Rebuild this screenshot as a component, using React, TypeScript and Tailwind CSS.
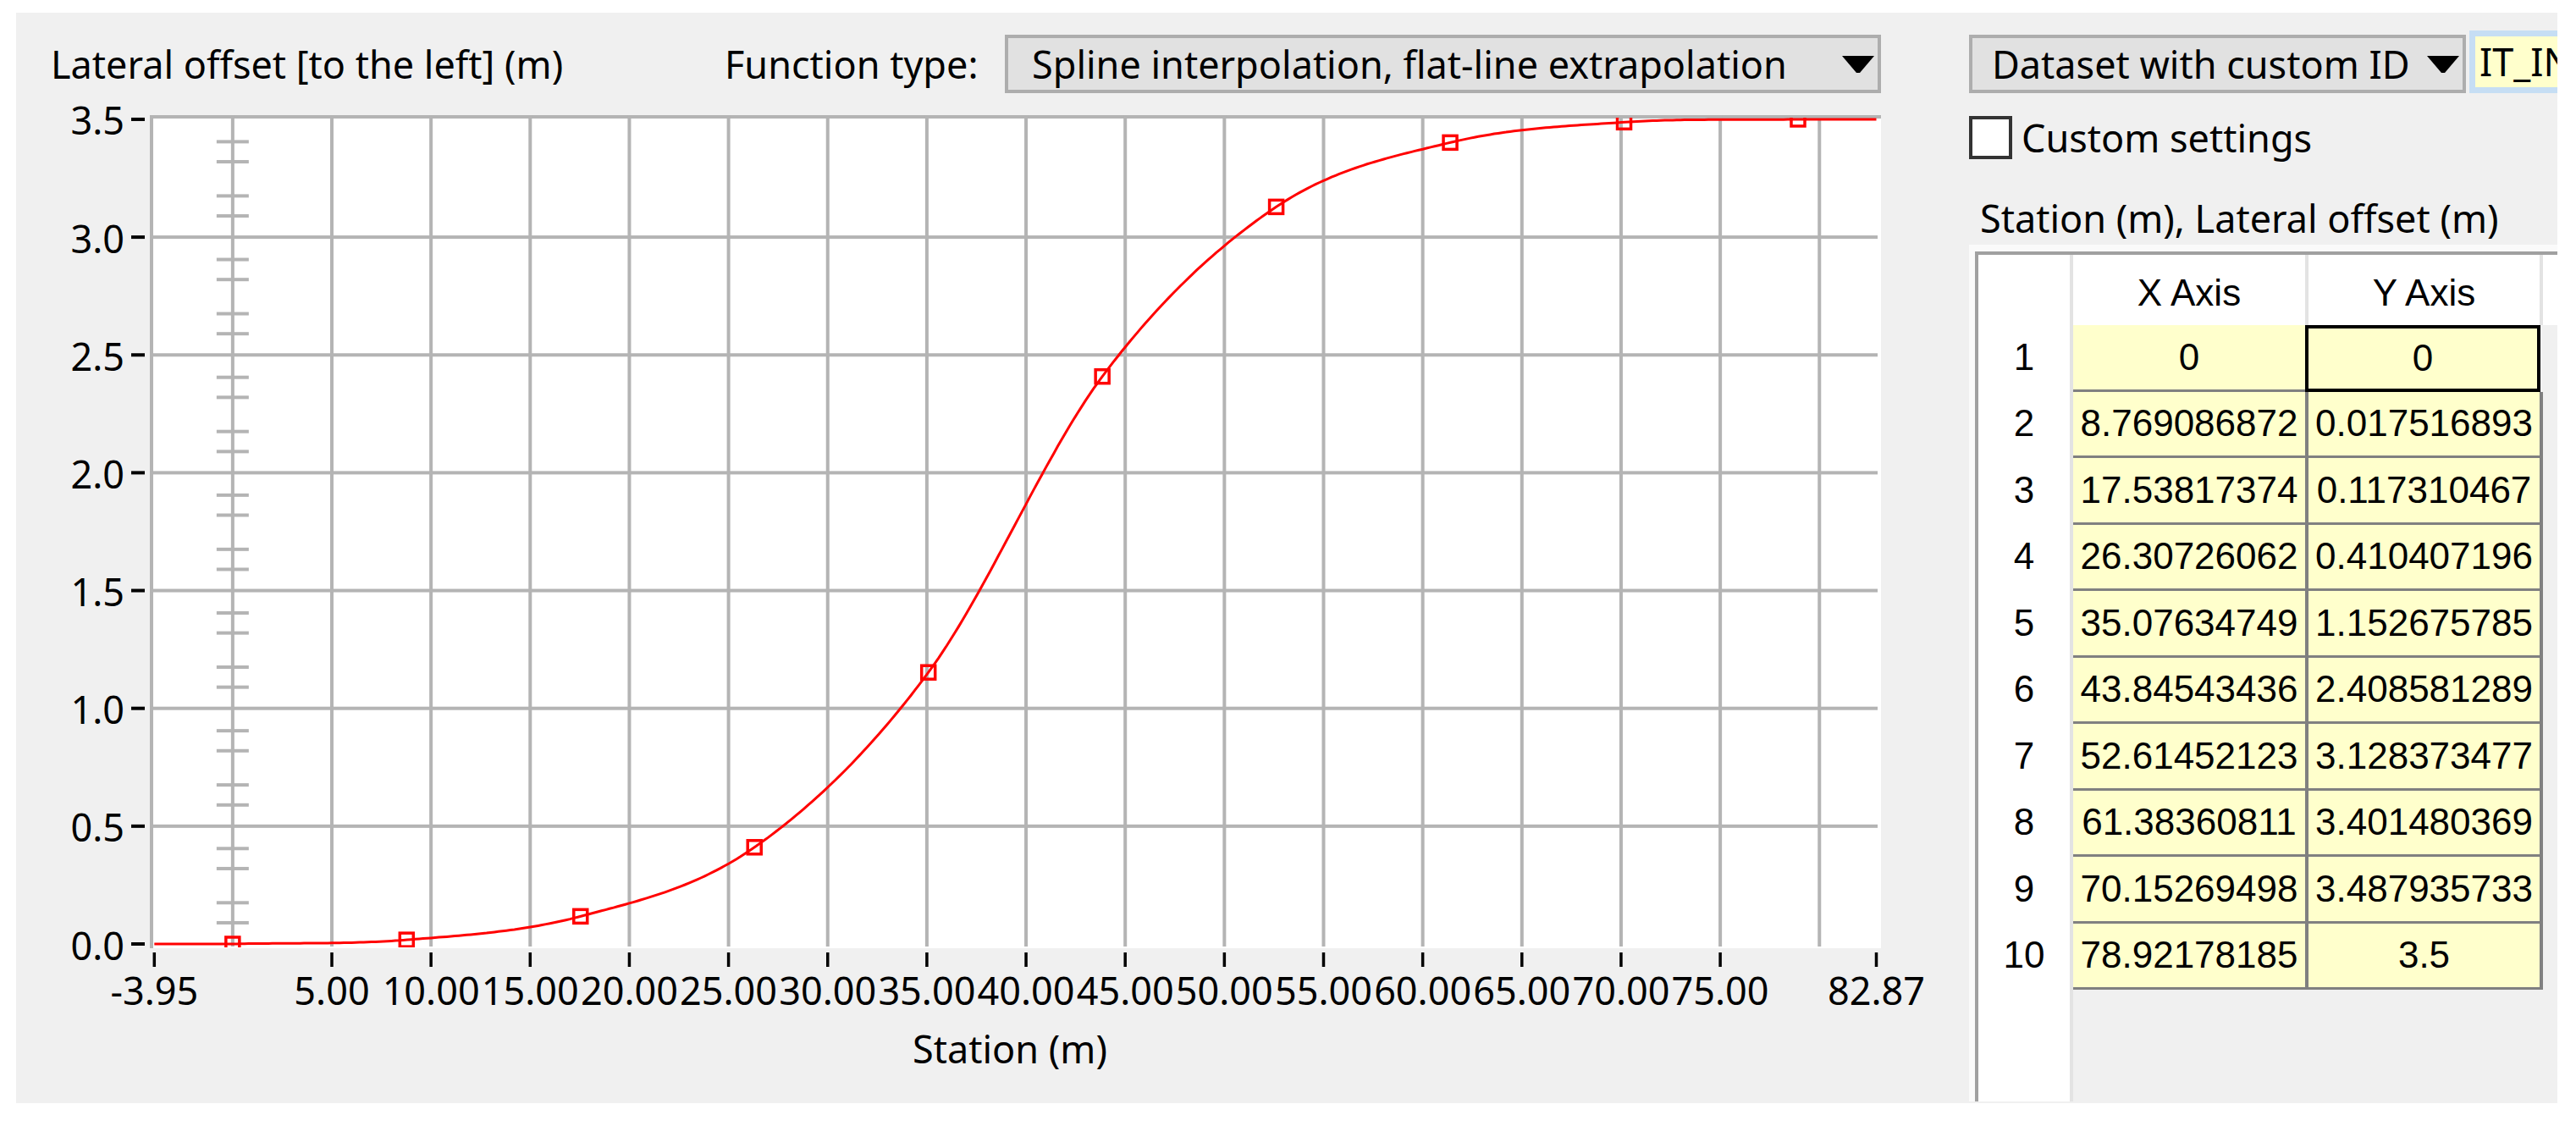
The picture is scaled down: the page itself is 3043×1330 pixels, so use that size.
import React from "react";

const XS = [0, 8.769086872, 17.53817374, 26.30726062, 35.07634749, 43.84543436, 52.61452123, 61.38360811, 70.15269498, 78.92178185];
const YS = [0, 0.017516893, 0.117310467, 0.410407196, 1.152675785, 2.408581289, 3.128373477, 3.401480369, 3.487935733, 3.5];

const ROWS = [
  ["0", "0"],
  ["8.769086872", "0.017516893"],
  ["17.53817374", "0.117310467"],
  ["26.30726062", "0.410407196"],
  ["35.07634749", "1.152675785"],
  ["43.84543436", "2.408581289"],
  ["52.61452123", "3.128373477"],
  ["61.38360811", "3.401480369"],
  ["70.15269498", "3.487935733"],
  ["78.92178185", "3.5"],
];

// page-pixel mapping of the plot
const px = (s: number) => 392 + (s - 5) * 23.43;
const py = (v: number) => 1115 - v * 278.3;

// cubic hermite with central-difference tangents (catmull-rom style)
function spline(xs: number[], ys: number[]) {
  const n = xs.length;
  const m = xs.map((_, i) => {
    if (i === 0) return (ys[1] - ys[0]) / (xs[1] - xs[0]);
    if (i === n - 1) return (ys[n - 1] - ys[n - 2]) / (xs[n - 1] - xs[n - 2]);
    return (ys[i + 1] - ys[i - 1]) / (xs[i + 1] - xs[i - 1]);
  });
  return (s: number) => {
    let i = 0;
    while (i < n - 2 && s > xs[i + 1]) i++;
    const h = xs[i + 1] - xs[i];
    const t = (s - xs[i]) / h;
    const t2 = t * t;
    const t3 = t2 * t;
    return (
      (2 * t3 - 3 * t2 + 1) * ys[i] +
      (t3 - 2 * t2 + t) * h * m[i] +
      (-2 * t3 + 3 * t2) * ys[i + 1] +
      (t3 - t2) * h * m[i + 1]
    );
  };
}

function curvePath() {
  const f = spline(XS, YS);
  const pts: string[] = [`M${px(-3.95)},${py(0)}`, `L${px(0)},${py(0)}`];
  const last = XS[XS.length - 1];
  for (let s = 0.2; s < last; s += 0.2) pts.push(`L${px(s).toFixed(1)},${py(f(s)).toFixed(1)}`);
  pts.push(`L${px(last)},${py(3.5)}`);
  pts.push(`L${px(82.87)},${py(3.5)}`);
  return pts.join(" ");
}

const GRID_STATIONS = Array.from({ length: 17 }, (_, i) => i * 5);
const H_LINES = [0.5, 1, 1.5, 2, 2.5, 3];
const Y_LABELS = [0, 0.5, 1, 1.5, 2, 2.5, 3, 3.5];
const X_TICKS = [-3.95, 5, 10, 15, 20, 25, 30, 35, 40, 45, 50, 55, 60, 65, 70, 75, 82.87];
const MINOR = [0.19, 0.36, 0.65, 0.82];

function Chart() {
  const font = '"Noto Sans", sans-serif';
  return (
    <svg width={2221} height={1080} viewBox="19 120 2221 1080" className="block overflow-visible">
      <defs>
        <clipPath id="plotClip">
          <rect x={180} y={139} width={2042} height={980} />
        </clipPath>
      </defs>

      {/* plot area */}
      <rect x={178} y={136} width={2044} height={984} fill="#ffffff" />
      <rect x={177} y={136} width={4} height={984} fill="#b4b4b4" />
      <rect x={177} y={136} width={2045} height={4} fill="#b4b4b4" />
      {GRID_STATIONS.map((s) => (
        <rect key={s} x={px(s) - 2} y={136} width={4} height={982} fill="#b4b4b4" />
      ))}
      {H_LINES.map((v) => (
        <rect key={v} x={177} y={py(v) - 2} width={2041} height={4} fill="#b4b4b4" />
      ))}
      {Array.from({ length: 7 }, (_, k) => 3.5 - k * 0.5).flatMap((upper) =>
        MINOR.map((f) => (
          <rect key={`${upper}-${f}`} x={px(0) - 19} y={py(upper - f * 0.5) - 2} width={38} height={4} fill="#b4b4b4" />
        ))
      )}

      {/* curve + points */}
      <g clipPath="url(#plotClip)">
        <path d={curvePath()} fill="none" stroke="#ff0000" strokeWidth={3} strokeLinejoin="round" />
        {XS.map((s, i) => (
          <rect key={s} x={px(s) - 8} y={py(YS[i]) - 8} width={16} height={16} fill="none" stroke="#ff0000" strokeWidth={3.5} />
        ))}
      </g>

      {/* y axis */}
      {Y_LABELS.map((v) => (
        <g key={v}>
          <rect x={155} y={py(v) - 2} width={16} height={4} fill="#000" />
          <text x={147} y={py(v) + 18.5} textAnchor="end" fontFamily={font} fontSize={45} fill="#000">
            {v.toFixed(1)}
          </text>
        </g>
      ))}

      {/* x axis */}
      {X_TICKS.map((s) => (
        <g key={s}>
          <rect x={px(s) - 1.75} y={1125} width={3.5} height={17} fill="#000" />
          <text x={px(s)} y={1187} textAnchor="middle" fontFamily={font} fontSize={45} fill="#000">
            {s.toFixed(2)}
          </text>
        </g>
      ))}
    </svg>
  );
}

function Arrow() {
  return (
    <svg width="38" height="20" viewBox="0 0 38 20" className="shrink-0">
      <polygon points="0,0 38,0 21,20 17,20" fill="#000" />
    </svg>
  );
}

export default function App() {
  return (
    <div className="w-[3043px] h-[1330px] bg-white pt-[15px] pl-[19px] font-['Noto_Sans',sans-serif] text-[45px] text-black">
      <div className="w-[3002px] h-[1288px] bg-[#f0f0f0] flex overflow-hidden">

        {/* Chart side */}
        <div className="w-[2221px] shrink-0 flex flex-col">
          <div className="mt-[26px] h-[69px] flex items-center">
            <div className="w-[837px] pl-[41px] whitespace-nowrap">Lateral offset [to the left] (m)</div>
            <div className="w-[331px] whitespace-nowrap">Function type:</div>
            <div className="w-[1035px] h-[69px] bg-[#e1e1e1] border-4 border-[#adadad] flex items-center justify-between pl-[28px] pr-[4px]">
              <span className="whitespace-nowrap">Spline interpolation, flat-line extrapolation</span>
              <Arrow />
            </div>
          </div>
          <div className="mt-[10px]">
            <Chart />
          </div>
          <div className="mt-[5px] ml-[162px] w-[2024px] text-center">Station (m)</div>
        </div>

        {/* Data side */}
        <div className="ml-[86px] w-[695px] shrink-0 flex flex-col overflow-hidden">
          <div className="mt-[21px] h-[74px] flex items-end">
            <div className="w-[587px] shrink-0 h-[69px] bg-[#e1e1e1] border-4 border-[#adadad] flex items-center justify-between pl-[23px] pr-[4px]">
              <span className="whitespace-nowrap">Dataset with custom ID</span>
              <Arrow />
            </div>
            <div className="ml-[4px] w-[200px] shrink-0 h-[74px] border-[7px] border-[#c6def4] bg-[#ffffcc] pl-[5px] flex items-center whitespace-nowrap">
              IT_INTERP
            </div>
          </div>

          <div className="mt-[27px] h-[51px] flex items-center">
            <div className="w-[51px] h-[51px] shrink-0 border-4 border-[#333333] bg-white" />
            <span className="ml-[11px] whitespace-nowrap">Custom settings</span>
          </div>

          <div className="h-[101px] pt-[36px] pl-[13px] whitespace-nowrap">Station (m), Lateral offset (m)</div>

          {/* Table */}
          <div className="h-[1012px] bg-[#fafafa] pt-[8px] pl-[7px] font-['Liberation_Sans',Arial,sans-serif] text-[44px]">
            <div className="h-full border-l-4 border-t-4 border-[#a0a0a0] flex">
              <div className="w-[112px] shrink-0 bg-white border-r-4 border-[#e3e3e3] flex flex-col">
                <div className="h-[83px]" />
                {ROWS.map((_, i) => (
                  <div key={i} className="h-[78.5px] pb-[3px] flex items-center justify-center">
                    {i + 1}
                  </div>
                ))}
              </div>

              <div className="flex-1 bg-[#f0f0f0] flex flex-col">
                <div className="h-[83px] shrink-0 bg-white flex">
                  <div className="w-[278px] border-r-4 border-[#e3e3e3] pt-[7px] flex items-center justify-center">X Axis</div>
                  <div className="w-[277px] border-r-4 border-[#e3e3e3] pt-[7px] flex items-center justify-center">Y Axis</div>
                </div>
                {ROWS.map(([x, y], i) =>
                  i === 0 ? (
                    <div key={i} className="h-[78.5px] shrink-0 flex">
                      <div className="w-[274px] bg-[#ffffcc] border-b-[3px] border-[#808080] flex items-center justify-center">{x}</div>
                      <div className="w-[278px] bg-[#ffffcc] border-4 border-black flex items-center justify-center">{y}</div>
                    </div>
                  ) : (
                    <div key={i} className="h-[78.5px] shrink-0 flex">
                      <div className="w-[278px] bg-[#ffffcc] border-r-4 border-b-[3px] border-[#808080] flex items-center justify-center whitespace-nowrap">{x}</div>
                      <div className="w-[277px] bg-[#ffffcc] border-r-4 border-b-[3px] border-[#808080] flex items-center justify-center whitespace-nowrap">{y}</div>
                    </div>
                  )
                )}
              </div>
            </div>
          </div>
        </div>
      </div>
    </div>
  );
}
